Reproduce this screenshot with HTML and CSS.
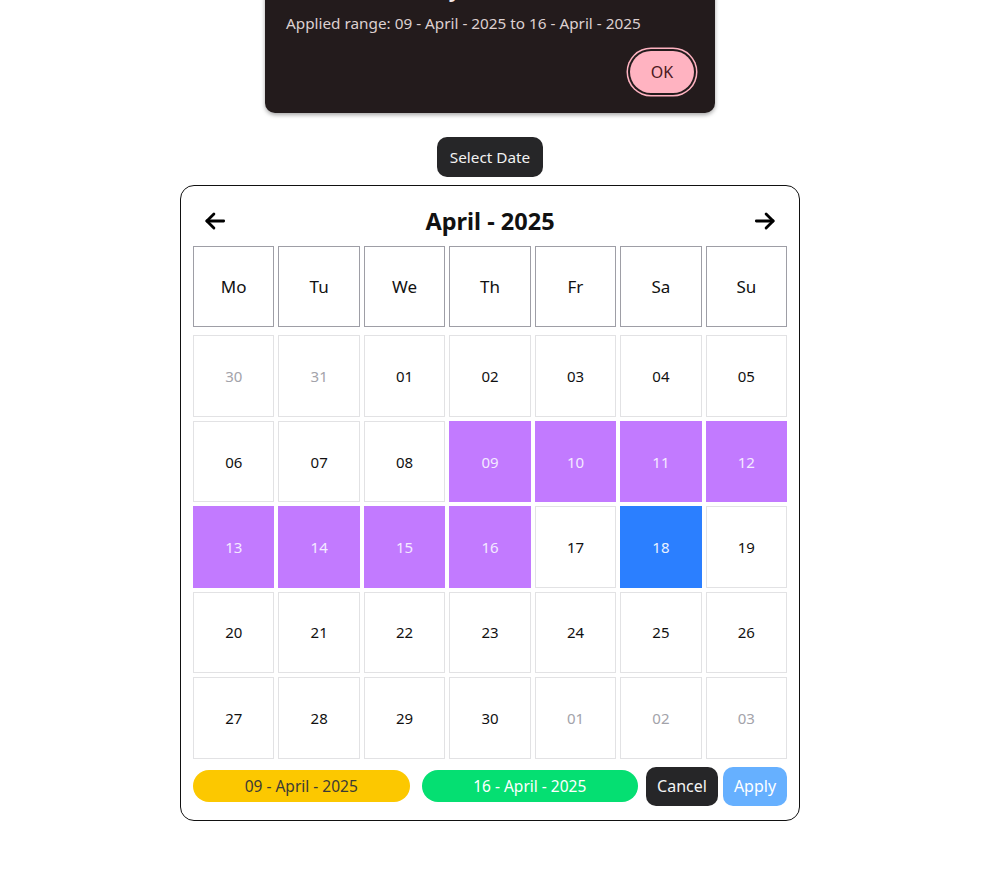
FILE: index.html
```html
<!DOCTYPE html>
<html lang="en">
<head>
<meta charset="utf-8">
<title>Date Picker</title>
<link rel="stylesheet" href="styles.css">
</head>
<body>
<div class="page">
  <div class="dialog">
    <h2 class="dialog-title">Selection is ready</h2>
    <p class="dialog-text">Applied range: 09 - April - 2025 to 16 - April - 2025</p>
    <div class="dialog-actions">
      <button class="ok-btn">OK</button>
    </div>
  </div>

  <button class="select-btn">Select Date</button>

  <div class="calendar">
    <div class="cal-header">
      <button class="nav-btn" aria-label="Previous month">
        <svg width="26" height="26" viewBox="0 0 24 24" fill="none" stroke="currentColor" stroke-width="2.6" stroke-linecap="round" stroke-linejoin="round"><path d="M20 12H4.5"/><path d="M11 5.5 4.5 12l6.5 6.5"/></svg>
      </button>
      <div class="cal-title">April - 2025</div>
      <button class="nav-btn" aria-label="Next month">
        <svg width="26" height="26" viewBox="0 0 24 24" fill="none" stroke="currentColor" stroke-width="2.6" stroke-linecap="round" stroke-linejoin="round"><path d="M4 12h15.5"/><path d="M13 5.5l6.5 6.5-6.5 6.5"/></svg>
      </button>
    </div>

    <div class="weekdays">
      <div class="wd">Mo</div><div class="wd">Tu</div><div class="wd">We</div><div class="wd">Th</div><div class="wd">Fr</div><div class="wd">Sa</div><div class="wd">Su</div>
    </div>

    <div class="days">
      <div class="day out">30</div><div class="day out">31</div><div class="day">01</div><div class="day">02</div><div class="day">03</div><div class="day">04</div><div class="day">05</div>
      <div class="day">06</div><div class="day">07</div><div class="day">08</div><div class="day range">09</div><div class="day range">10</div><div class="day range">11</div><div class="day range">12</div>
      <div class="day range">13</div><div class="day range">14</div><div class="day range">15</div><div class="day range">16</div><div class="day">17</div><div class="day today">18</div><div class="day">19</div>
      <div class="day">20</div><div class="day">21</div><div class="day">22</div><div class="day">23</div><div class="day">24</div><div class="day">25</div><div class="day">26</div>
      <div class="day">27</div><div class="day">28</div><div class="day">29</div><div class="day">30</div><div class="day out">01</div><div class="day out">02</div><div class="day out">03</div>
    </div>

    <div class="cal-footer">
      <div class="pill pill-start">09 - April - 2025</div>
      <div class="pill pill-end">16 - April - 2025</div>
      <button class="btn cancel">Cancel</button>
      <button class="btn apply">Apply</button>
    </div>
  </div>
</div>
</body>
</html>
```

FILE: styles.css
```css
* { box-sizing: border-box; }

html, body {
  margin: 0;
  padding: 0;
  background: #ffffff;
}

body {
  font-family: "Noto Sans", "Open Sans", "DejaVu Sans", sans-serif;
  color: #111;
  overflow: hidden;
}

.page {
  width: 980px;
  display: flex;
  flex-direction: column;
  align-items: center;
}

button {
  font-family: inherit;
  cursor: pointer;
}

/* Dialog */
.dialog {
  width: 450px;
  margin-top: -38px;
  background: #231b1c;
  border-radius: 10px;
  padding: 14px 21px 20px 21px;
  box-shadow: 0 2px 4px rgba(0,0,0,0.35);
  color: #e6dcdc;
}

.dialog-title {
  margin: 0;
  font-size: 20px;
  line-height: 28px;
  font-weight: 700;
  color: #f1e6e6;
}

.dialog-text {
  margin: 7px 0 0 0;
  font-size: 15.3px;
  line-height: 24px;
  color: #ddd0d0;
}

.dialog-actions {
  display: flex;
  justify-content: flex-end;
  margin-top: 16px;
}

.ok-btn {
  width: 64px;
  height: 42px;
  border: none;
  border-radius: 21px;
  background: #ffb3c1;
  color: #4b1820;
  font-size: 16px;
  box-shadow: 0 0 0 2px #231b1c, 0 0 0 3.5px #ffb3c1;
}

/* Select Date */
.select-btn {
  margin-top: 24px;
  height: 40px;
  padding: 0 13px;
  border: none;
  border-radius: 10px;
  background: #262628;
  color: #f2f2f2;
  font-size: 15.3px;
}

/* Calendar */
.calendar {
  width: 620px;
  margin-top: 8px;
  border: 1px solid #111;
  border-radius: 14px;
  padding: 12px 12px 14px 12px;
  background: #fff;
}

.cal-header {
  height: 48px;
  margin-top: -1px;
  display: flex;
  align-items: center;
  justify-content: space-between;
}

.nav-btn {
  width: 44px;
  height: 44px;
  border: none;
  background: transparent;
  color: #000;
  display: flex;
  align-items: center;
  justify-content: center;
  padding: 0;
}

.cal-title {
  font-size: 23.5px;
  font-weight: 700;
  color: #111;
}

.weekdays,
.days {
  display: grid;
  grid-template-columns: repeat(7, 1fr);
  gap: 4px;
}

.weekdays {
  margin-top: 1px;
  margin-bottom: 8px;
}

.wd {
  aspect-ratio: 1 / 1;
  border: 1px solid #9e9ea6;
  display: flex;
  align-items: center;
  justify-content: center;
  font-size: 17px;
  color: #111;
}

.day {
  aspect-ratio: 1 / 1;
  border: 1px solid #e2e2e4;
  display: flex;
  align-items: center;
  justify-content: center;
  font-size: 15px;
  color: #111;
}

.day.out {
  color: #a3a3aa;
}

.day.range {
  background: #c27aff;
  border-color: #c27aff;
  color: #f4eaff;
}

.day.today {
  background: #2b7fff;
  border-color: #2b7fff;
  color: #e8f1ff;
}

/* Footer */
.cal-footer {
  display: flex;
  align-items: center;
  margin-top: 8px;
}

.pill {
  flex: 1;
  height: 32px;
  border-radius: 16px;
  display: flex;
  align-items: center;
  justify-content: center;
  font-size: 15.5px;
}

.pill-start {
  background: #fcc800;
  color: #3b3a36;
  margin-right: 12px;
}

.pill-end {
  background: #05df72;
  color: #ffffff;
  margin-right: 8px;
}

.btn {
  height: 39px;
  border: none;
  border-radius: 10px;
  font-size: 16px;
  padding: 0;
}

.cancel {
  width: 72px;
  background: #262628;
  color: #f4f4f4;
  margin-right: 5px;
}

.apply {
  width: 64px;
  background: #66b0ff;
  color: #ffffff;
}
```
